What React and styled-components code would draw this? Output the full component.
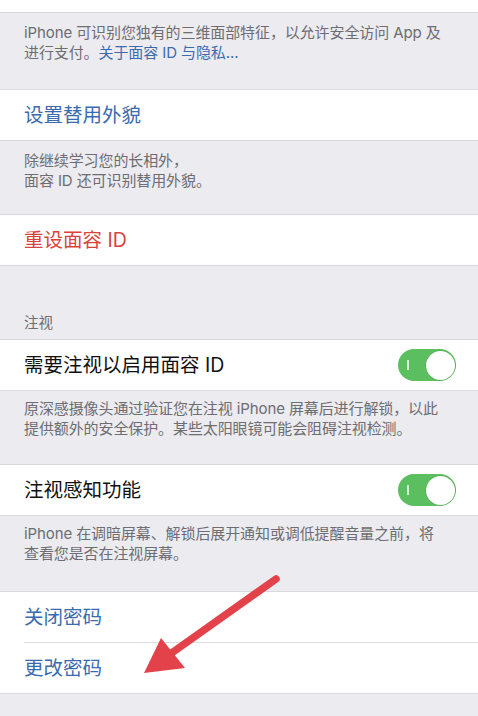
import styled, { createGlobalStyle } from "styled-components";

const GlobalStyle = createGlobalStyle`
    html, body {
        margin: 0;
        padding: 0;
        background: #EBEBF0;
    }
    * {
        box-sizing: border-box;
    }
`;

export default function App() {
    return (
        <>
            <GlobalStyle />
            <Page>
                <TopStrip />
                <Footer $h={76} $top={10}>
                    iPhone 可识别您独有的三维面部特征，以允许安全访问 App 及<br />
                    进行支付。<FooterLink>关于面容 ID 与隐私...</FooterLink>
                </Footer>

                <Group>
                    <Row>
                        <Label $color="#3A6BB0">设置替用外貌</Label>
                    </Row>
                </Group>
                <Footer $h={73} $top={10}>
                    除继续学习您的长相外，<br />
                    面容 ID 还可识别替用外貌。
                </Footer>

                <Group>
                    <Row>
                        <Label $color="#D8433B">重设面容 ID</Label>
                    </Row>
                </Group>

                <Header>注视</Header>
                <Group>
                    <Row>
                        <Label>需要注视以启用面容 ID</Label>
                        <Toggle />
                    </Row>
                </Group>
                <Footer $h={73} $top={8}>
                    原深感摄像头通过验证您在注视 iPhone 屏幕后进行解锁，以此<br />
                    提供额外的安全保护。某些太阳眼镜可能会阻碍注视检测。
                </Footer>

                <Group>
                    <Row>
                        <Label>注视感知功能</Label>
                        <Toggle />
                    </Row>
                </Group>
                <Footer $h={75} $top={8}>
                    iPhone 在调暗屏幕、解锁后展开通知或调低提醒音量之前，将<br />
                    查看您是否在注视屏幕。
                </Footer>

                <Group>
                    <Row>
                        <Label $color="#3A6BB0">关闭密码</Label>
                    </Row>
                    <Row $inset>
                        <Label $color="#3A6BB0">更改密码</Label>
                    </Row>
                </Group>

                <Arrow viewBox="0 0 478 716" width="478" height="716">
                    <line x1="276" y1="579" x2="166" y2="657" stroke="#E4424B" strokeWidth="7.5" strokeLinecap="round" />
                    <polygon points="144,673 161,638 185,668" fill="#E4424B" />
                </Arrow>
            </Page>
        </>
    );
}

function Toggle() {
    return (
        <Switch>
            <OnMark />
            <Knob />
        </Switch>
    );
}

const Page = styled.div`
    position: relative;
    width: 478px;
    min-height: 716px;
    overflow: hidden;
    background: #EBEBF0;
    font-family: "Inter", "Noto Sans CJK SC", sans-serif;
`;

const TopStrip = styled.div`
    height: 13px;
    background: #FFFFFF;
    border-bottom: 1px solid #D9D9DE;
`;

const Footer = styled.div`
    height: ${props => props.$h}px;
    padding: ${props => props.$top}px 24px 0 24px;
    font-size: 15px;
    line-height: 19.5px;
    color: #6D6D72;
    letter-spacing: -0.1px;
`;

const FooterLink = styled.span`
    color: #3A6BB0;
`;

const Header = styled.div`
    height: 73px;
    padding: 47px 24px 0 24px;
    font-size: 14.5px;
    line-height: 20px;
    color: #6D6D72;
`;

const Group = styled.div`
    background: #FFFFFF;
    border-top: 1px solid #D9D9DE;
    border-bottom: 1px solid #D9D9DE;
`;

const Row = styled.div`
    position: relative;
    height: 50px;
    display: flex;
    align-items: center;
    justify-content: space-between;
    padding: 0 22px 0 24px;

    ${props => props.$inset && `
        &::before {
            content: "";
            position: absolute;
            top: 0;
            left: 24px;
            right: 0;
            border-top: 1px solid #DEDEE2;
        }
        height: 51px;
    `}
`;

const Label = styled.span`
    font-size: 19.5px;
    line-height: 24px;
    color: ${props => props.$color || "#111111"};
`;

const Switch = styled.div`
    width: 58px;
    height: 32px;
    border-radius: 16px;
    background: #5CBF5F;
    display: flex;
    align-items: center;
    justify-content: space-between;
    padding: 0 1.5px 0 9px;
`;

const OnMark = styled.div`
    width: 1.5px;
    height: 10px;
    background: rgba(255, 255, 255, 0.75);
`;

const Knob = styled.div`
    width: 29px;
    height: 29px;
    border-radius: 50%;
    background: #FFFFFF;
    box-shadow: 0 0 0 0.5px rgba(60, 140, 60, 0.5);
`;

const Arrow = styled.svg`
    position: absolute;
    top: 0;
    left: 0;
    pointer-events: none;
`;
